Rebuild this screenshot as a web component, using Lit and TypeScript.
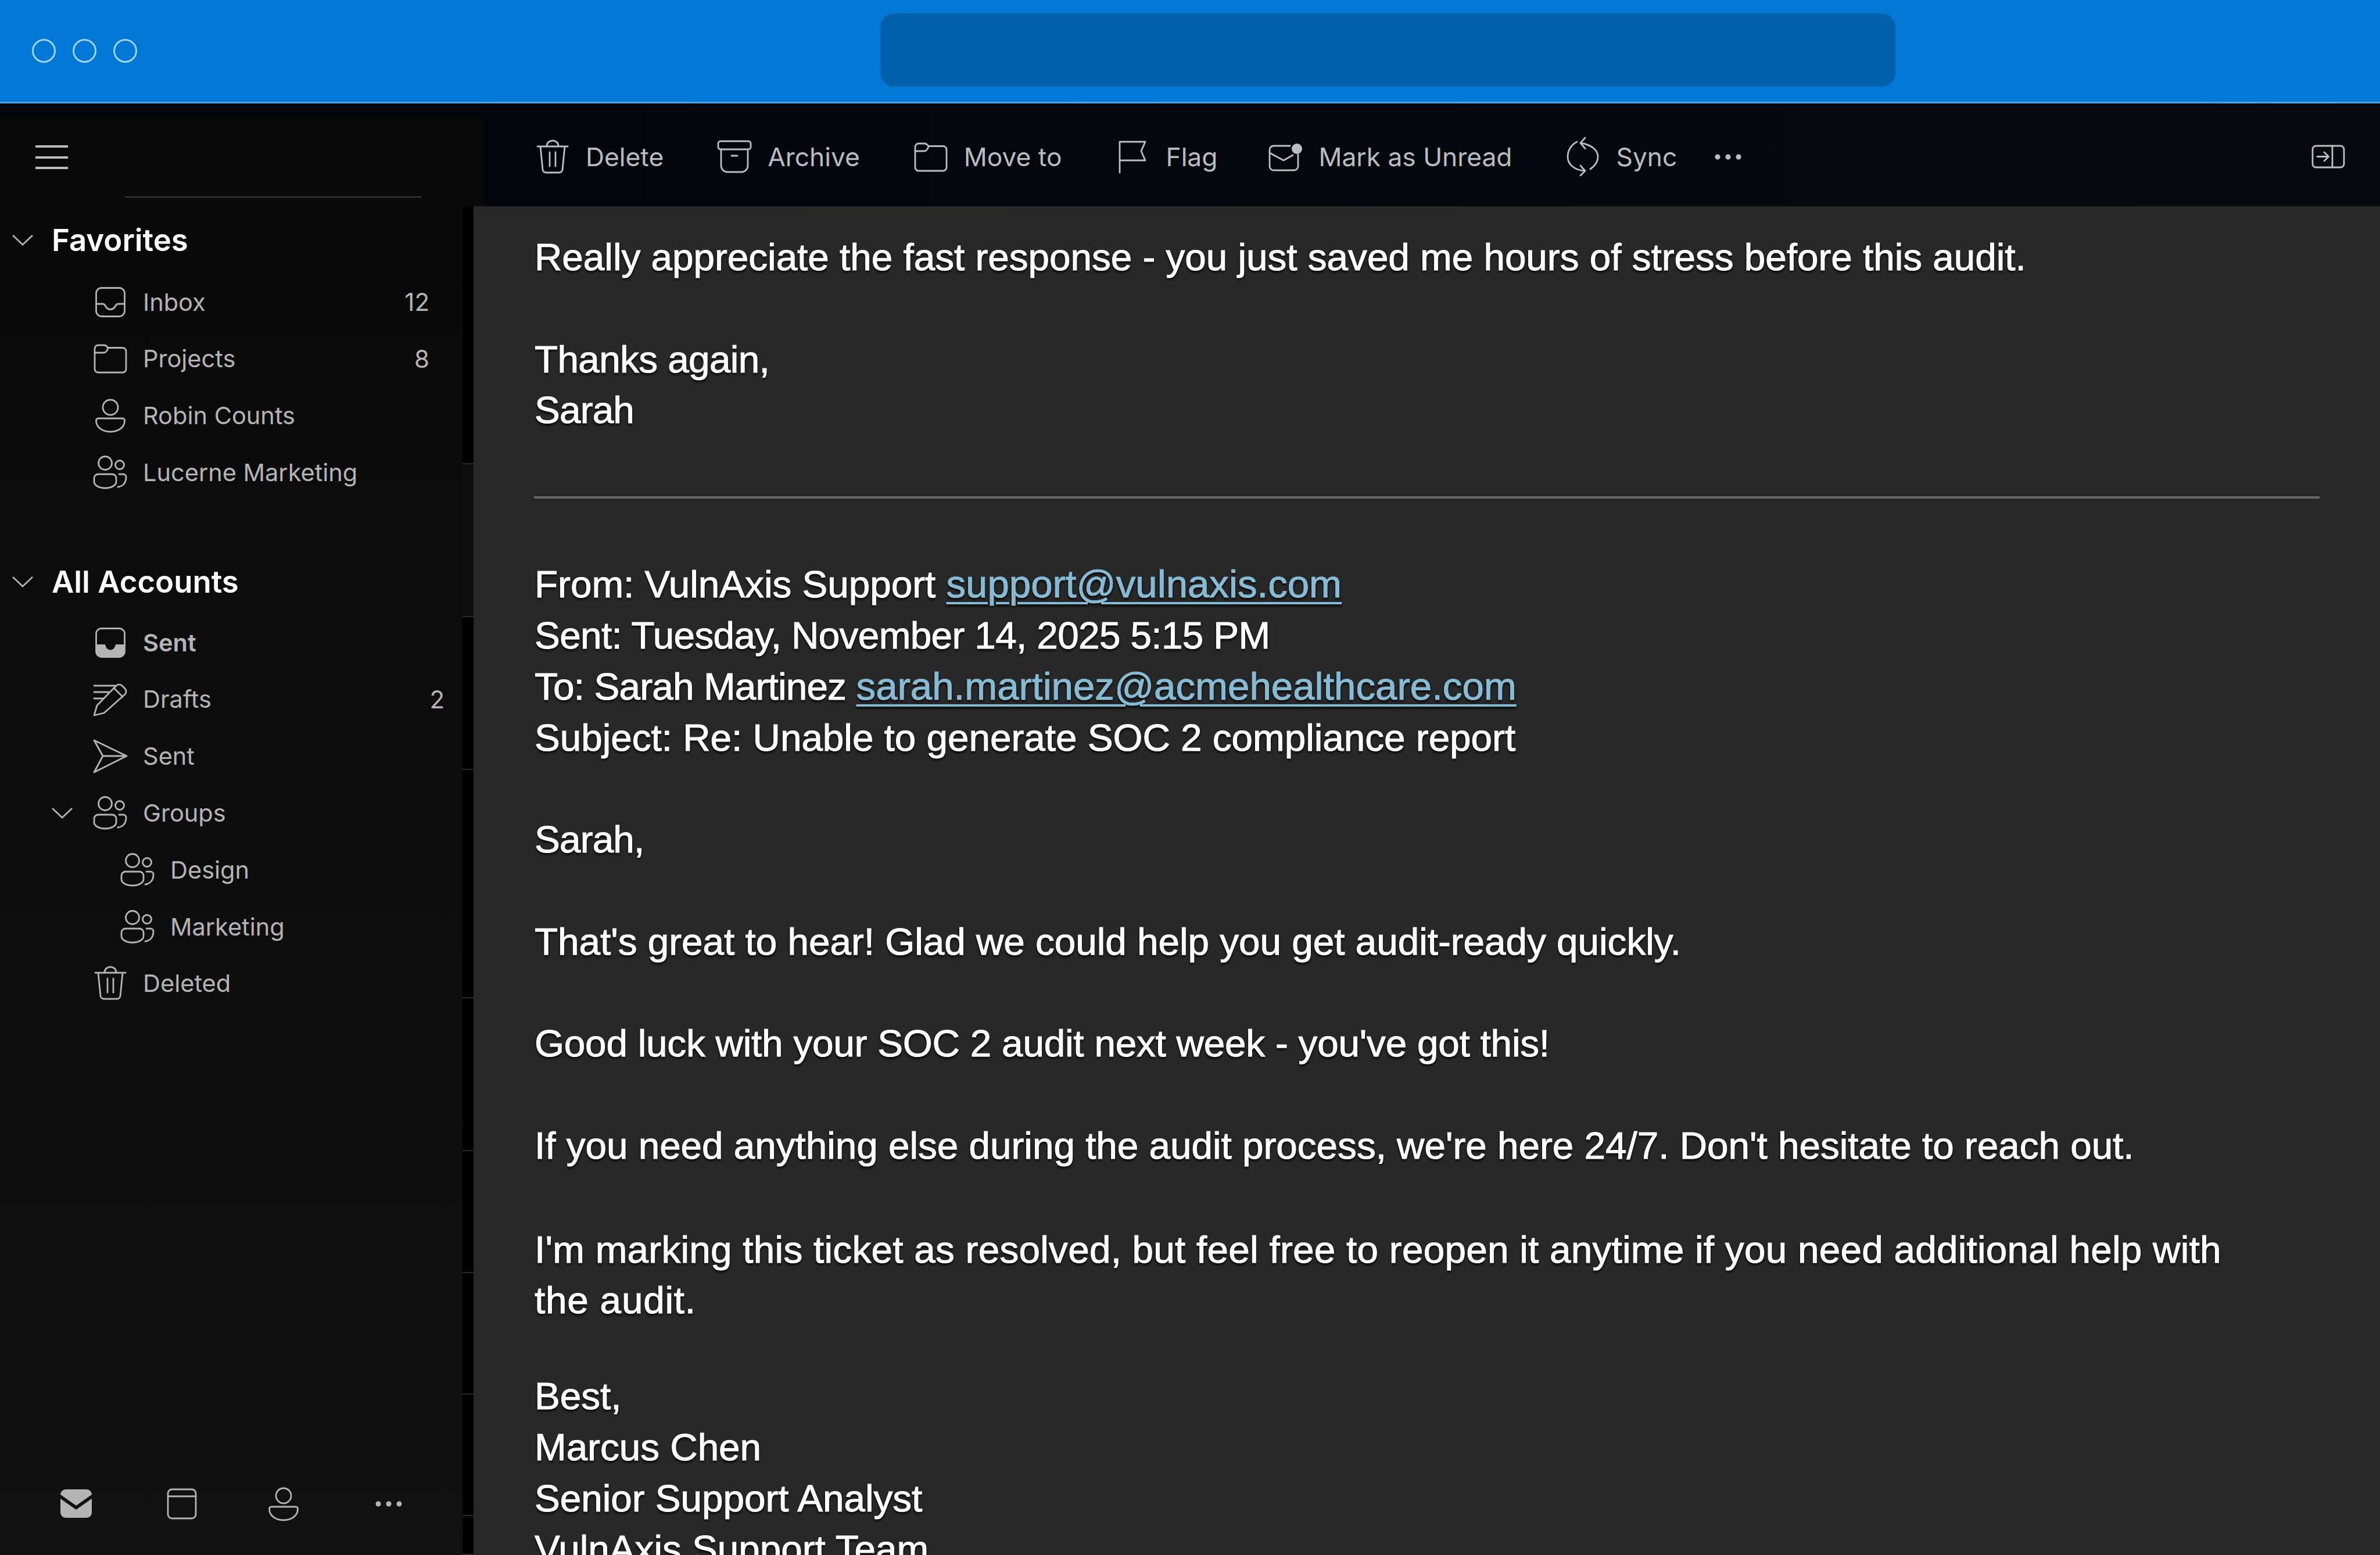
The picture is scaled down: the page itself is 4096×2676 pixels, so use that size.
import { LitElement, html, css, svg } from "lit";
import { customElement } from "lit/decorators.js";

const I: Record<string, unknown> = {
  inbox: svg`<rect x="5.5" y="5.5" width="49" height="49" rx="9"/><path d="M6 33H17c2 0 3 1 4 3 2 4 5 6.500 9 6.500s7-2.500 9-6.500c1-2 2-3 4-3H54"/>`,
  inboxFill: svg`<rect x="5.500" y="5.500" width="49" height="49" rx="9"/><path class="f" d="M6 33H21c1 5 4 9.500 9 9.500s8-4.500 9-9.500H54V46a8 8 0 0 1-8 8H14a8 8 0 0 1-8-8Z"/>`,
  folder: svg`<path d="M3 13a6 6 0 0 1 6-6H19c3 0 4 1 6 3.500l1 1H51a6 6 0 0 1 6 6V48a6 6 0 0 1-6 6H9a6 6 0 0 1-6-6Z"/><path d="M3 20H18c4 0 6-2 8-8"/>`,
  person: svg`<circle cx="30" cy="16" r="13"/><path d="M9 35H51a3.500 3.500 0 0 1 3.500 4C54.500 50 44 58 30 58S5.500 50 5.500 39A3.500 3.500 0 0 1 9 35Z"/>`,
  group: svg`<circle cx="21" cy="14" r="11.500"/><circle cx="46" cy="17" r="7.500"/><path d="M9 33H33a7 7 0 0 1 7 7V46C40 52 32 57 21 57 10 57 2 52 2 46V40a7 7 0 0 1 7-7Z"/><path d="M45 33H52a5 5 0 0 1 5 5C57 47 52 54 43 55"/>`,
  drafts: svg`<path d="M2 7H38M2 18H27M2 29H17"/><path d="M2 58 7 41 40 7a7 7 0 0 1 10 0l5 5a7 7 0 0 1 0 10L19 54Z"/><path d="M36 11 51 26"/>`,
  sent: svg`<path d="M2 3 58 30 2 58 17 30ZM17 30H58"/>`,
  trash: svg`<path d="M4 12H56M20 11a10 9 0 0 1 20 0M9 12 13 52a6 6 0 0 0 6 5H41a6 6 0 0 0 6-5L51 12M25 22V46M35 22V46"/>`,
  archive: svg`<rect x="2" y="3" width="56" height="14" rx="4"/><path d="M7 17V45a11 11 0 0 0 11 11H42a11 11 0 0 0 11-11V17M25 28H35"/>`,
  flag: svg`<path d="M8 57V4H52L45 20 52 36H8"/>`,
  mark: svg`<path d="M38 11H10a7 7 0 0 0-7 7V46a7 7 0 0 0 7 7H45a7 7 0 0 0 7-7V26M3 23 27 36 43 27"/><circle class="f" cx="50" cy="16" r="9"/>`,
  sync: svg`<path d="M34 2 26 11 34 20.600M26 11C46 14 56 24 56 35 56 44 50 51 43 56M20 9C10 14 4 24 4 35 4 48 16 58 34 59M26 50 34 59 26 67"/>`,
  panel: svg`<rect x="3" y="3" width="54" height="37" rx="6"/><path d="M37 3V40M11 21.500H30M23 14 30.500 21.500 23 29"/>`,
  calendar: svg`<rect x="6" y="5" width="48" height="50" rx="7"/><path d="M6 17H54"/>`,
  mail: svg`<path class="f" d="M3 14a9 9 0 0 1 9-9H48a9 9 0 0 1 9 9L30 33Z"/><path class="f" d="M3 21 30 40 57 21V45a9 9 0 0 1-9 9H12a9 9 0 0 1-9-9Z"/>`,
};

const icon = (n: string, h = 60) =>
  html`<svg class="ic" width="60" height=${h} viewBox="0 0 60 ${h}">${I[n]}</svg>`;
const chev = html`<svg class="chev" width="36" height="20" viewBox="0 0 36 20"><path d="M1 2 18 18 35 2"/></svg>`;
const dots = html`<svg class="dots" width="60" height="12" viewBox="0 0 60 12"><circle cx="12" cy="6" r="4.500"/><circle cx="30" cy="6" r="4.500"/><circle cx="48" cy="6" r="4.500"/></svg>`;

const FAV = [
  { i: "inbox", t: "Inbox", c: "12" },
  { i: "folder", t: "Projects", c: "8" },
  { i: "person", t: "Robin Counts" },
  { i: "group", t: "Lucerne Marketing" },
];
const ACC = [
  { i: "inboxFill", t: "Sent", cls: "bold" },
  { i: "drafts", t: "Drafts", c: "2", cls: "far" },
  { i: "sent", t: "Sent" },
  { i: "group", t: "Groups", cls: "chevd" },
  { i: "group", t: "Design", cls: "sub" },
  { i: "group", t: "Marketing", cls: "sub" },
  { i: "trash", t: "Deleted" },
];
const TOOLS = [
  { i: "trash", t: "Delete" },
  { i: "archive", t: "Archive" },
  { i: "folder", t: "Move to" },
  { i: "flag", t: "Flag" },
  { i: "mark", t: "Mark as Unread" },
  { i: "sync", t: "Sync", h: 70 },
];
const STRIP = [
  { h: 444 },
  { h: 263, dim: true },
  { h: 263 },
  { h: 393 },
  { h: 263 },
  { h: 210 },
  { h: 209 },
  { h: 209 },
  { h: 67 },
];

@customElement("app-root")
export class AppRoot extends LitElement {
  static styles = css`
    :host { display: block; width: 4096px; height: 2676px; overflow: hidden; background: #03070c; font-family: Inter, "Liberation Sans", sans-serif; }
    .title { height: 175px; background: #0278d6; border-bottom: 3px solid #4da5e8; display: flex; align-items: center; position: relative; box-sizing: content-box; }
    .lights { display: flex; gap: 29px; padding-left: 55px; }
    .lights i { width: 41px; height: 41px; box-sizing: border-box; border: 3px solid #9ed5fb; border-radius: 50%; display: block; }
    .search { position: absolute; left: 1515px; top: 23px; width: 1747px; height: 126px; border-radius: 24px; background: #0060ac; }
    .main { display: grid; grid-template-columns: 832px 1fr; height: 2498px; }
    .left { display: flex; flex-direction: column; height: 2498px; }
    .lefttop { height: 26px; }
    .head { height: 151px; background: #0a0a0a; box-sizing: border-box; padding-top: 46px; }
    .burger { width: 56px; margin-left: 61px; display: flex; flex-direction: column; gap: 14.500px; }
    .burger i { height: 4px; background: #bdbdbd; display: block; }
    .divider { height: 2px; width: 511px; margin: 47px 0 0 215px; background: #3a3a3a; }
    .panel { display: flex; width: 815px; flex: 1; min-height: 0; }
    .nav { width: 796px; display: flex; flex-direction: column; background: linear-gradient(#0a0a0a, #111); box-sizing: border-box; padding-top: 9px; padding-bottom: 58px; }
    .strip { width: 19px; display: flex; flex-direction: column; }
    .strip i { display: block; background: #000; border-bottom: 2px solid #2a2a2a; box-sizing: border-box; }
    .strip i.dim { background: #0f0f0f; }
    .h { height: 97.800px; display: flex; align-items: center; padding-left: 21px; gap: 32px; color: #fff; font-size: 52.700px; font-weight: 600; margin-bottom: 9px; }
    .h.second { margin-top: 90px; margin-bottom: 7px; }
    .chev path { fill: none; stroke: #b0b0b0; stroke-width: 2.800; }
    .row { height: 97.800px; display: flex; align-items: center; padding-left: 160px; padding-right: 57px; color: #b4b4b4; font-size: 41.500px; }
    .row .ic { margin-right: 26px; flex: none; }
    .ic { fill: none; stroke: #b4b4b4; stroke-width: 2.800; stroke-linejoin: round; stroke-linecap: round; }
    .ic .f { fill: #b4b4b4; stroke: none; }
    .row.bold { font-weight: 600; }
    .row.sub { padding-left: 207px; }
    .row.far { padding-right: 31px; }
    .row.chevd { padding-left: 89px; }
    .row.chevd .chev { margin-right: 35px; }
    .count { margin-left: auto; font-size: 42px; }
    .bottom { margin-top: auto; display: grid; grid-template-columns: 182px 175px 181px 60px; padding-left: 101px; align-items: center; height: 60px; }
    .dots { fill: #b4b4b4; display: block; }
    .right { display: flex; flex-direction: column; min-width: 0; height: 2498px; }
    .bar { height: 177px; flex: none; display: flex; align-items: center; padding: 6px 59px 0 89px; box-sizing: border-box; background: linear-gradient(90deg, #02060c, #070b0f); color: #b9bcbf; font-size: 44.300px; }
    .tool { display: flex; align-items: center; gap: 27px; margin-right: 92px; white-space: nowrap; }
    .tool:nth-of-type(4) { margin-right: 87px; }
    .tool:last-of-type { margin-right: 66px; }
    .bar .ic { stroke: #bcbfc2; }
    .bar .ic .f { fill: #bcbfc2; }
    .bar .dots { fill: #bcbfc2; margin-left: -8px; }
    .bar .end { margin-left: auto; }
    .content { flex: 1; min-height: 0; overflow: hidden; margin-left: -17px; background: #282828; box-sizing: border-box; padding: 44px 105px 0 105px; color: #fff; font-family: "Liberation Sans", Arial, sans-serif; font-size: 65.600px; line-height: 87.800px; -webkit-text-stroke: 1px #fff; text-shadow: 0 3px 4px #000; }
    p { margin: 0 0 87.800px; white-space: nowrap; }
    p.tight { margin-bottom: 0; }
    p.wide { margin-bottom: 90.800px; }
    p.sig { margin-top: -11px; }
    .rule { height: 4px; margin: 104px -1px; background: #666; }
    a { font-size: 67.200px; line-height: 1; color: #86bbd3; -webkit-text-stroke: 0.700px #86bbd3; text-decoration: underline; text-decoration-thickness: 4px; text-underline-offset: 8px; }
    .tighter { letter-spacing: -0.800px; }
    .tight1 { letter-spacing: -0.600px; }
    .tight2 { letter-spacing: -0.200px; }
    .loose { letter-spacing: 0.270px; }
    .loose2 { letter-spacing: 0.800px; }
  `;

  private row(r: { i: string; t: string; c?: string; cls?: string }) {
    return html`<div class="row ${r.cls ?? ""}">
      ${r.cls === "chevd" ? chev : ""}${icon(r.i)}<span>${r.t}</span>
      ${r.c ? html`<span class="count">${r.c}</span>` : ""}
    </div>`;
  }

  render() {
    return html`
      <div class="title">
        <div class="lights"><i></i><i></i><i></i></div>
        <div class="search"></div>
      </div>
      <div class="main">
        <div class="left">
          <div class="lefttop"></div>
          <div class="head">
            <div class="burger"><i></i><i></i><i></i></div>
            <div class="divider"></div>
          </div>
          <div class="panel">
            <div class="nav">
              <div class="h">${chev}<span>Favorites</span></div>
              ${FAV.map((r) => this.row(r))}
              <div class="h second">${chev}<span>All Accounts</span></div>
              ${ACC.map((r) => this.row(r))}
              <div class="bottom">${icon("mail")}${icon("calendar")}${icon("person")}${dots}</div>
            </div>
            <div class="strip">
              ${STRIP.map((s) => html`<i class=${s.dim ? "dim" : ""} style="height:${s.h}px"></i>`)}
            </div>
          </div>
        </div>
        <div class="right">
          <div class="bar">
            ${TOOLS.map((t) => html`<div class="tool">${icon(t.i, t.h ?? 60)}<span>${t.t}</span></div>`)}
            ${dots}
            <svg class="ic end" width="60" height="43" viewBox="0 0 60 43">${I.panel}</svg>
          </div>
          <div class="content">
            <p>Really appreciate the fast response - you just saved me hours of stress before this audit.</p>
            <p class="tight"><span class="tight1">Thanks again,</span><br /><span class="tighter">Sarah</span></p>
            <div class="rule"></div>
            <p>From: VulnAxis Support <a>support@vulnaxis.com</a><br />
            <span class="tight1">Sent: Tuesday, November 14, 2025 5:15 PM</span><br />
            <span class="tighter">To: Sarah Martinez </span><a>sarah.martinez@acmehealthcare.com</a><br />
            Subject: Re: Unable to generate SOC 2 compliance report</p>
            <p class="tighter">Sarah,</p>
            <p>That's great to hear! Glad we could help you get audit-ready quickly.</p>
            <p class="tight2">Good luck with your SOC 2 audit next week - you've got this!</p>
            <p class="wide">If you need anything else during the audit process, we're here 24/7. Don't hesitate to reach out.</p>
            <p><span class="loose">I'm marking this ticket as resolved, but feel free to reopen it anytime if you need additional help with</span><br /><span class="loose2">the audit.</span></p>
            <p class="sig">Best,<br />Marcus Chen<br />Senior Support Analyst<br />VulnAxis Support Team</p>
          </div>
        </div>
      </div>
    `;
  }
}
